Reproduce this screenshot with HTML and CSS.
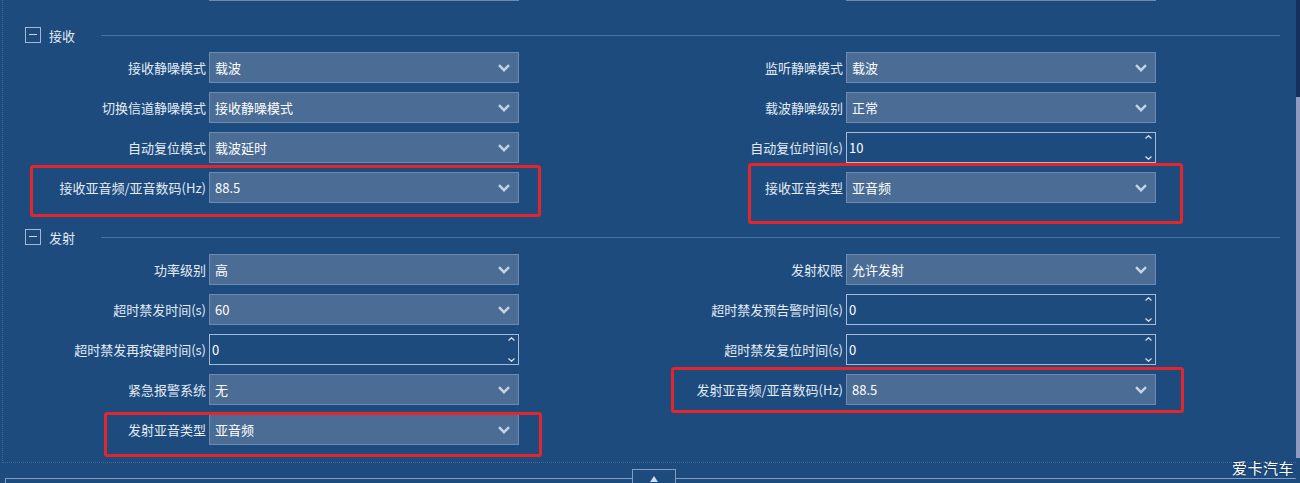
FILE: index.html
```html
<!DOCTYPE html>
<html>
<head>
<meta charset="utf-8">
<title>信道参数</title>
<link rel="stylesheet" href="styles.css">
</head>
<body>
<div class="screen">

<div class="view">
<div class="panel">

<!-- tail of the group above, scrolled out of view -->
<div class="rows">
    <div class="field"><span class="lbl"></span><div class="combo"></div></div>
    <div class="field"><span class="lbl"></span><div class="combo"></div></div>
</div>

<section class="group">
<div class="group-head"><span class="fold"></span><span class="group-title">接收</span><span class="group-rule"></span></div>
<div class="rows">
    <div class="field"><span class="lbl">接收静噪模式</span><div class="combo"><span>载波</span><svg class="chev" viewBox="0 0 12 8"><path d="M1 1.2 6 6.2 11 1.2"/></svg></div></div>
    <div class="field"><span class="lbl">监听静噪模式</span><div class="combo"><span>载波</span><svg class="chev" viewBox="0 0 12 8"><path d="M1 1.2 6 6.2 11 1.2"/></svg></div></div>
    <div class="field"><span class="lbl">切换信道静噪模式</span><div class="combo"><span>接收静噪模式</span><svg class="chev" viewBox="0 0 12 8"><path d="M1 1.2 6 6.2 11 1.2"/></svg></div></div>
    <div class="field"><span class="lbl">载波静噪级别</span><div class="combo"><span>正常</span><svg class="chev" viewBox="0 0 12 8"><path d="M1 1.2 6 6.2 11 1.2"/></svg></div></div>
    <div class="field"><span class="lbl">自动复位模式</span><div class="combo"><span>载波延时</span><svg class="chev" viewBox="0 0 12 8"><path d="M1 1.2 6 6.2 11 1.2"/></svg></div></div>
    <div class="field"><span class="lbl">自动复位时间(s)</span><div class="spin"><span>10</span><span class="spin-btns"><svg viewBox="0 0 7 4"><path d="M.5 3.5 3.5.8 6.5 3.5"/></svg><svg viewBox="0 0 7 4"><path d="M.5.5 3.5 3.2 6.5.5"/></svg></span></div></div>
    <div class="field"><span class="lbl">接收亚音频/亚音数码(Hz)</span><div class="combo"><span>88.5</span><svg class="chev" viewBox="0 0 12 8"><path d="M1 1.2 6 6.2 11 1.2"/></svg></div></div>
    <div class="field"><span class="lbl">接收亚音类型</span><div class="combo"><span>亚音频</span><svg class="chev" viewBox="0 0 12 8"><path d="M1 1.2 6 6.2 11 1.2"/></svg></div></div>
</div>
</section>

<section class="group">
<div class="group-head"><span class="fold"></span><span class="group-title">发射</span><span class="group-rule"></span></div>
<div class="rows">
    <div class="field"><span class="lbl">功率级别</span><div class="combo"><span>高</span><svg class="chev" viewBox="0 0 12 8"><path d="M1 1.2 6 6.2 11 1.2"/></svg></div></div>
    <div class="field"><span class="lbl">发射权限</span><div class="combo"><span>允许发射</span><svg class="chev" viewBox="0 0 12 8"><path d="M1 1.2 6 6.2 11 1.2"/></svg></div></div>
    <div class="field"><span class="lbl">超时禁发时间(s)</span><div class="combo"><span>60</span><svg class="chev" viewBox="0 0 12 8"><path d="M1 1.2 6 6.2 11 1.2"/></svg></div></div>
    <div class="field"><span class="lbl">超时禁发预告警时间(s)</span><div class="spin"><span>0</span><span class="spin-btns"><svg viewBox="0 0 7 4"><path d="M.5 3.5 3.5.8 6.5 3.5"/></svg><svg viewBox="0 0 7 4"><path d="M.5.5 3.5 3.2 6.5.5"/></svg></span></div></div>
    <div class="field"><span class="lbl">超时禁发再按键时间(s)</span><div class="spin"><span>0</span><span class="spin-btns"><svg viewBox="0 0 7 4"><path d="M.5 3.5 3.5.8 6.5 3.5"/></svg><svg viewBox="0 0 7 4"><path d="M.5.5 3.5 3.2 6.5.5"/></svg></span></div></div>
    <div class="field"><span class="lbl">超时禁发复位时间(s)</span><div class="spin"><span>0</span><span class="spin-btns"><svg viewBox="0 0 7 4"><path d="M.5 3.5 3.5.8 6.5 3.5"/></svg><svg viewBox="0 0 7 4"><path d="M.5.5 3.5 3.2 6.5.5"/></svg></span></div></div>
    <div class="field"><span class="lbl">紧急报警系统</span><div class="combo"><span>无</span><svg class="chev" viewBox="0 0 12 8"><path d="M1 1.2 6 6.2 11 1.2"/></svg></div></div>
    <div class="field"><span class="lbl">发射亚音频/亚音数码(Hz)</span><div class="combo"><span>88.5</span><svg class="chev" viewBox="0 0 12 8"><path d="M1 1.2 6 6.2 11 1.2"/></svg></div></div>
    <div class="field"><span class="lbl">发射亚音类型</span><div class="combo"><span>亚音频</span><svg class="chev" viewBox="0 0 12 8"><path d="M1 1.2 6 6.2 11 1.2"/></svg></div></div>
</div>
</section>

</div>
<div class="scrollbar"><div class="scroll-top"></div><div class="scroll-thumb"></div></div>
</div>

<div class="dock">
    <span class="dock-line dock-left"></span>
    <span class="dock-tab"><span class="dock-arrow"></span></span>
    <span class="dock-line dock-right"></span>
</div>

<!-- red highlight frames -->
<div class="mark mark-rx-code"></div>
<div class="mark mark-rx-type"></div>
<div class="mark mark-tx-code"></div>
<div class="mark mark-tx-type"></div>

<div class="watermark">爱卡汽车</div>

</div>
</body>
</html>
```

FILE: styles.css
```css
body {margin:0; background:#1d4b7e; font:13px "Noto Sans CJK SC", "Liberation Sans", sans-serif; color:#e4ebf4;}
.screen {position:relative; width:1300px; height:483px; overflow:hidden; background:#1d4b7e;}
/* scroll view */
.view {display:flex; height:463px; overflow:hidden;}
.panel {flex:1; margin:-30px 0 0 2px; border-left:1px dotted #3e6a9b; border-bottom:1px dotted #3e6a9b;}
.scrollbar {width:4px; display:flex; flex-direction:column;}
.scroll-top {height:97px; background:#15305c;}
.scroll-thumb {flex:1; background:#8e9abf; margin-bottom:5px;}
/* groups */
.group {margin-top:22px;}
.group-head {display:flex; align-items:center; height:24px; padding-left:22px; margin-bottom:5px;}
.fold {position:relative; width:14px; height:14px; border:1px solid #a3b8d6;}
.fold::after {content:""; position:absolute; left:3px; right:3px; top:6px; height:1px; background:#c9d6e8;}
.group-title {margin-left:8px; color:#e1e9f3;}
.group-rule {flex:1; height:1px; margin:0 16px 0 26px; background:#4575a8;}
/* form rows */
.rows {display:grid; grid-template-columns:637px 637px; row-gap:9px;}
.field {display:flex; align-items:center; height:31px;}
.lbl {width:203px; margin-right:3px; text-align:right; white-space:nowrap; color:#e4ebf4;}
.combo, .spin {box-sizing:border-box; width:310px; height:31px; display:flex; align-items:center; justify-content:space-between; color:#fff;}
.combo {background:#4a6c95; border:1px solid #6b8bb3; padding:0 8px 0 5px;}
.chev {width:12px; height:8px; fill:none; stroke:#c6d3e5; stroke-width:2.4; stroke-linejoin:miter;}
.spin {border:1px solid #a6bbd8; padding:0 3px 0 2px;}
.spin-btns {display:flex; flex-direction:column; justify-content:space-between; height:25px;}
.spin-btns svg {width:7px; height:4px; fill:none; stroke:#d5dfec; stroke-width:1.3;}
/* bottom dock */
.dock {display:flex; align-items:flex-start; height:20px; padding-top:6px; box-sizing:border-box;}
.dock-line {height:12px; margin-top:9px; border-top:1px solid #7d9dc4;}
.dock-left {width:626px; margin-left:5px; border-left:1px solid #7d9dc4;}
.dock-right {flex:1; margin-right:4px;}
.dock-tab {position:relative; width:42px; height:20px; border:1px solid #7d9dc4; border-bottom:none;}
.dock-arrow {position:absolute; left:17px; top:6px; border:4px solid transparent; border-bottom:6px solid #cfe0f3; border-top:none;}
/* red highlight frames */
.mark {position:absolute; box-sizing:border-box; border:3px solid #e3262c; border-radius:3px;}
.mark-rx-code {left:30px; top:165px; width:511px; height:52px;}
.mark-rx-type {left:748px; top:163px; width:435px; height:61px;}
.mark-tx-code {left:671px; top:367px; width:513px; height:46px;}
.mark-tx-type {left:104px; top:412px; width:438px; height:45px;}
.watermark {position:absolute; right:6px; bottom:5px; font-size:15px; letter-spacing:0.5px; color:#fff; text-shadow:0 0 2px rgba(0,0,0,0.4);}
```
